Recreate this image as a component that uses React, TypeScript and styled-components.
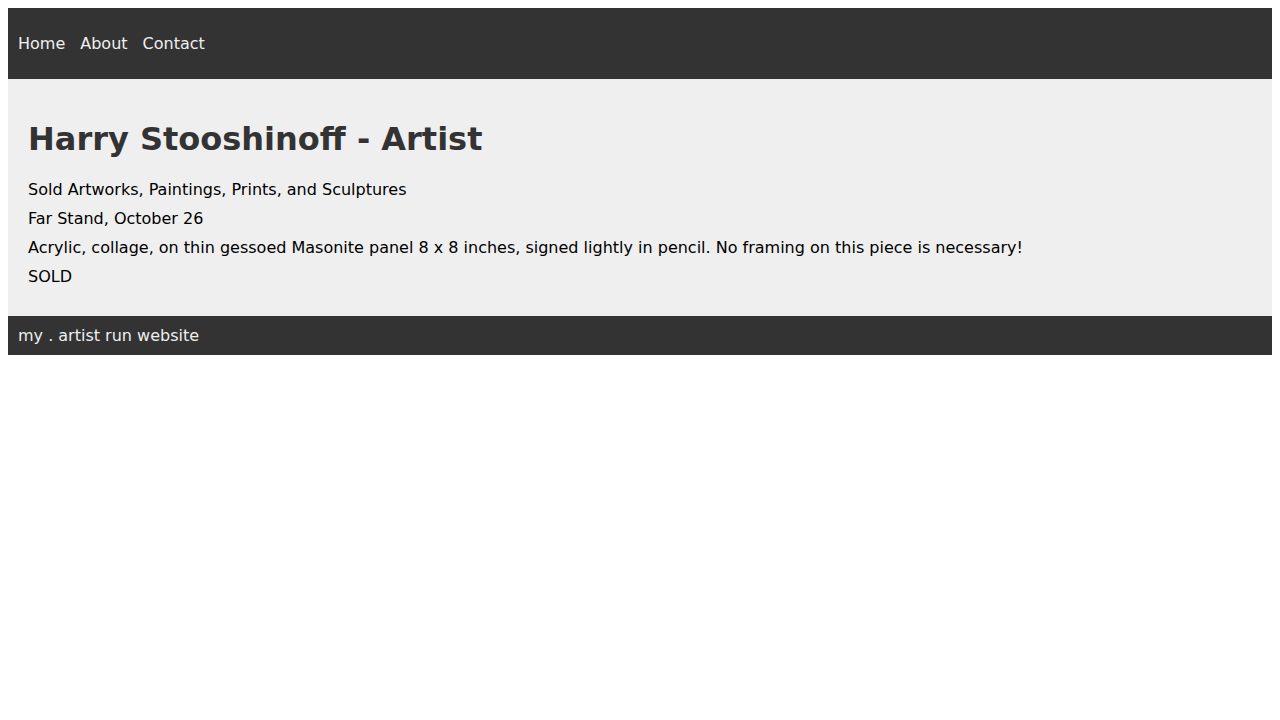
import React from "react";
import styled, { createGlobalStyle } from "styled-components";

const Global = createGlobalStyle`
  body {
    margin: 8px;
    font-family: "DejaVu Sans", sans-serif;
    font-size: 16px;
    background: #fff;
    color: #000;
  }
`;

const Header = styled.header`
  background: #333;
  padding: 10px;
`;

const NavList = styled.ul`
  list-style: none;
  margin: 16px 0;
  padding: 0;
  display: flex;
  gap: 15px;
`;

const NavLink = styled.a`
  color: #efefef;
  text-decoration: none;
`;

const Main = styled.main`
  background: #efefef;
  padding: 20px;
  display: flow-root;
`;

const Title = styled.h1`
  font-size: 32px;
  font-weight: bold;
  color: #333;
  margin: 21.44px 0;
`;

const Para = styled.p`
  margin: 10px 0;
`;

const Footer = styled.footer`
  background: #333;
  color: #efefef;
  padding: 10px;
`;

export default function App() {
  return (
    <>
      <Global />
      <Header>
        <nav>
          <NavList>
            <li><NavLink href="#">Home</NavLink></li>
            <li><NavLink href="#">About</NavLink></li>
            <li><NavLink href="#">Contact</NavLink></li>
          </NavList>
        </nav>
      </Header>
      <Main>
        <Title>Harry Stooshinoff - Artist</Title>
        <Para>Sold Artworks, Paintings, Prints, and Sculptures</Para>
        <Para>Far Stand, October 26</Para>
        <Para>
          Acrylic, collage, on thin gessoed Masonite panel 8 x 8 inches, signed lightly in pencil. No framing on this piece is necessary!
        </Para>
        <Para>SOLD</Para>
      </Main>
      <Footer>my . artist run website</Footer>
    </>
  );
}
